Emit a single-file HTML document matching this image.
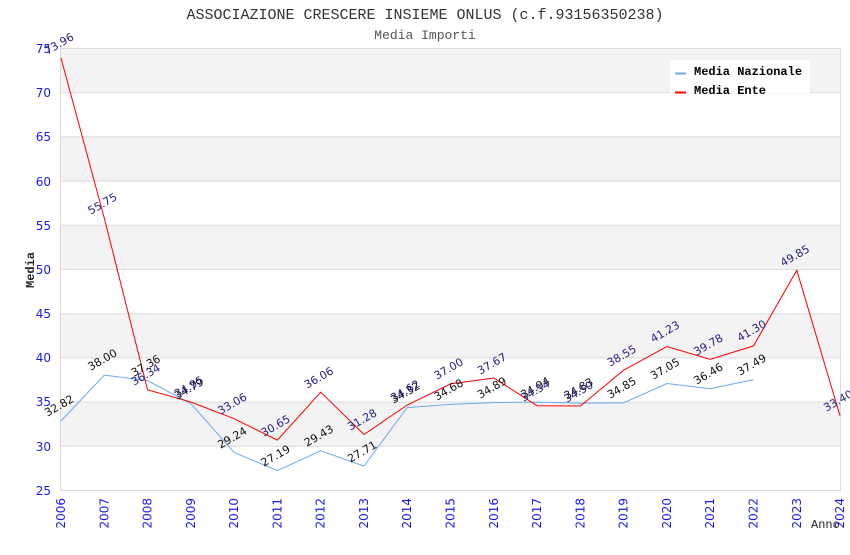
<!DOCTYPE html>
<html><head><style>body{margin:0;background:#fff}</style></head><body>
<svg width="850" height="550" xmlns="http://www.w3.org/2000/svg" font-family="DejaVu Sans, sans-serif">
<rect width="850" height="550" fill="#fff"/>
<g fill="#f3f3f3">
<rect x="61" y="48.5" width="779" height="44.2"/>
<rect x="61" y="136.9" width="779" height="44.2"/>
<rect x="61" y="225.3" width="779" height="44.2"/>
<rect x="61" y="313.7" width="779" height="44.2"/>
<rect x="61" y="402.1" width="779" height="44.2"/>
</g>
<g stroke="#dcdcdc" stroke-width="1">
<line x1="61" y1="48.5" x2="840" y2="48.5"/><line x1="61" y1="92.7" x2="840" y2="92.7"/><line x1="61" y1="136.9" x2="840" y2="136.9"/><line x1="61" y1="181.1" x2="840" y2="181.1"/><line x1="61" y1="225.3" x2="840" y2="225.3"/><line x1="61" y1="269.5" x2="840" y2="269.5"/><line x1="61" y1="313.7" x2="840" y2="313.7"/><line x1="61" y1="357.9" x2="840" y2="357.9"/><line x1="61" y1="402.1" x2="840" y2="402.1"/><line x1="61" y1="446.3" x2="840" y2="446.3"/><line x1="61" y1="490.5" x2="840" y2="490.5"/>
<line x1="60.5" y1="48" x2="60.5" y2="491"/><line x1="840.5" y1="48" x2="840.5" y2="491"/>
</g>
<g font-family="Liberation Mono, monospace" fill="#333" text-anchor="middle">
<text x="425" y="19" font-size="15">ASSOCIAZIONE CRESCERE INSIEME ONLUS (c.f.93156350238)</text>
<text x="425" y="39" font-size="13" fill="#555">Media Importi</text>
<text transform="translate(34,270) rotate(-90)" font-size="12" font-weight="bold" fill="#222">Media</text>
</g>
<text x="811" y="528" font-family="Liberation Mono, monospace" font-size="12" fill="#222">Anno</text>
<g fill="#1a1aee" font-size="12" text-anchor="end">
<text x="51" y="53">75</text><text x="51" y="97">70</text><text x="51" y="141">65</text><text x="51" y="186">60</text><text x="51" y="230">55</text><text x="51" y="274">50</text><text x="51" y="318">45</text><text x="51" y="362">40</text><text x="51" y="406">35</text><text x="51" y="451">30</text><text x="51" y="495">25</text>
</g>
<g fill="#1a1aee" font-size="12" text-anchor="end">
<text transform="translate(65,498) rotate(-90)">2006</text><text transform="translate(108.3,498) rotate(-90)">2007</text><text transform="translate(151.6,498) rotate(-90)">2008</text><text transform="translate(194.8,498) rotate(-90)">2009</text><text transform="translate(238.1,498) rotate(-90)">2010</text><text transform="translate(281.4,498) rotate(-90)">2011</text><text transform="translate(324.7,498) rotate(-90)">2012</text><text transform="translate(368,498) rotate(-90)">2013</text><text transform="translate(411.2,498) rotate(-90)">2014</text><text transform="translate(454.5,498) rotate(-90)">2015</text><text transform="translate(497.8,498) rotate(-90)">2016</text><text transform="translate(541.1,498) rotate(-90)">2017</text><text transform="translate(584.4,498) rotate(-90)">2018</text><text transform="translate(627.6,498) rotate(-90)">2019</text><text transform="translate(670.9,498) rotate(-90)">2020</text><text transform="translate(714.2,498) rotate(-90)">2021</text><text transform="translate(757.5,498) rotate(-90)">2022</text><text transform="translate(800.8,498) rotate(-90)">2023</text><text transform="translate(844,498) rotate(-90)">2024</text>
</g>
<polyline fill="none" stroke="#6aaaf0" stroke-width="1" points="61,420.9 104.3,375.1 147.6,380.7 190.8,403.5 234.1,452.5 277.4,470.6 320.7,450.8 364,466 407.2,407.6 450.5,404.4 493.8,402.6 537.1,402.1 580.4,403.1 623.6,402.9 666.9,383.5 710.2,388.7 753.5,379.6"/>
<polyline fill="none" stroke="#ff0000" stroke-width="1" points="61,58 104.3,218.2 147.6,389.8 190.8,402 234.1,418.7 277.4,440.1 320.7,392.2 364,434.5 407.2,405 450.5,383.9 493.8,378 537.1,405.7 580.4,406 623.6,370.2 666.9,346.5 710.2,359.3 753.5,345.9 796.8,270.3 840,415.7"/>
<g font-size="11" text-anchor="middle" fill="#111">
<text transform="translate(61,409) rotate(-30)">32.82</text>
<text transform="translate(104.3,363) rotate(-30)">38.00</text>
<text transform="translate(147.6,369) rotate(-30)">37.36</text>
<text transform="translate(190.8,392) rotate(-30)">34.79</text>
<text transform="translate(234.1,441) rotate(-30)">29.24</text>
<text transform="translate(277.4,459) rotate(-30)">27.19</text>
<text transform="translate(320.7,439) rotate(-30)">29.43</text>
<text transform="translate(364,455) rotate(-30)">27.71</text>
<text transform="translate(407.2,396) rotate(-30)">34.32</text>
<text transform="translate(450.5,393) rotate(-30)">34.68</text>
<text transform="translate(493.8,391) rotate(-30)">34.89</text>
<text transform="translate(537.1,391) rotate(-30)">34.94</text>
<text transform="translate(580.4,392) rotate(-30)">34.83</text>
<text transform="translate(623.6,391) rotate(-30)">34.85</text>
<text transform="translate(666.9,372) rotate(-30)">37.05</text>
<text transform="translate(710.2,377) rotate(-30)">36.46</text>
<text transform="translate(753.5,368) rotate(-30)">37.49</text>
</g>
<g font-size="11" text-anchor="middle" fill="#22228a">
<text transform="translate(61,47) rotate(-30)">73.96</text>
<text transform="translate(104.3,207) rotate(-30)">55.75</text>
<text transform="translate(147.6,378) rotate(-30)">36.34</text>
<text transform="translate(190.8,390) rotate(-30)">34.95</text>
<text transform="translate(234.1,407) rotate(-30)">33.06</text>
<text transform="translate(277.4,429) rotate(-30)">30.65</text>
<text transform="translate(320.7,381) rotate(-30)">36.06</text>
<text transform="translate(364,423) rotate(-30)">31.28</text>
<text transform="translate(407.2,394) rotate(-30)">34.62</text>
<text transform="translate(450.5,372) rotate(-30)">37.00</text>
<text transform="translate(493.8,367) rotate(-30)">37.67</text>
<text transform="translate(537.1,394) rotate(-30)">34.54</text>
<text transform="translate(580.4,395) rotate(-30)">34.50</text>
<text transform="translate(623.6,359) rotate(-30)">38.55</text>
<text transform="translate(666.9,335) rotate(-30)">41.23</text>
<text transform="translate(710.2,348) rotate(-30)">39.78</text>
<text transform="translate(753.5,334) rotate(-30)">41.30</text>
<text transform="translate(796.8,259) rotate(-30)">49.85</text>
<text transform="translate(840,404) rotate(-30)">33.40</text>
</g>
<rect x="670" y="60" width="140" height="33" fill="#fff"/>
<line x1="675" y1="73.5" x2="686" y2="73.5" stroke="#6aaaf0" stroke-width="2"/>
<line x1="675" y1="92.5" x2="686" y2="92.5" stroke="#ff0000" stroke-width="2"/>
<g font-family="Liberation Mono, monospace" font-size="12" font-weight="bold" fill="#000">
<text x="694" y="75">Media Nazionale</text>
<text x="694" y="94">Media Ente</text>
</g>
</svg>
</body></html>
